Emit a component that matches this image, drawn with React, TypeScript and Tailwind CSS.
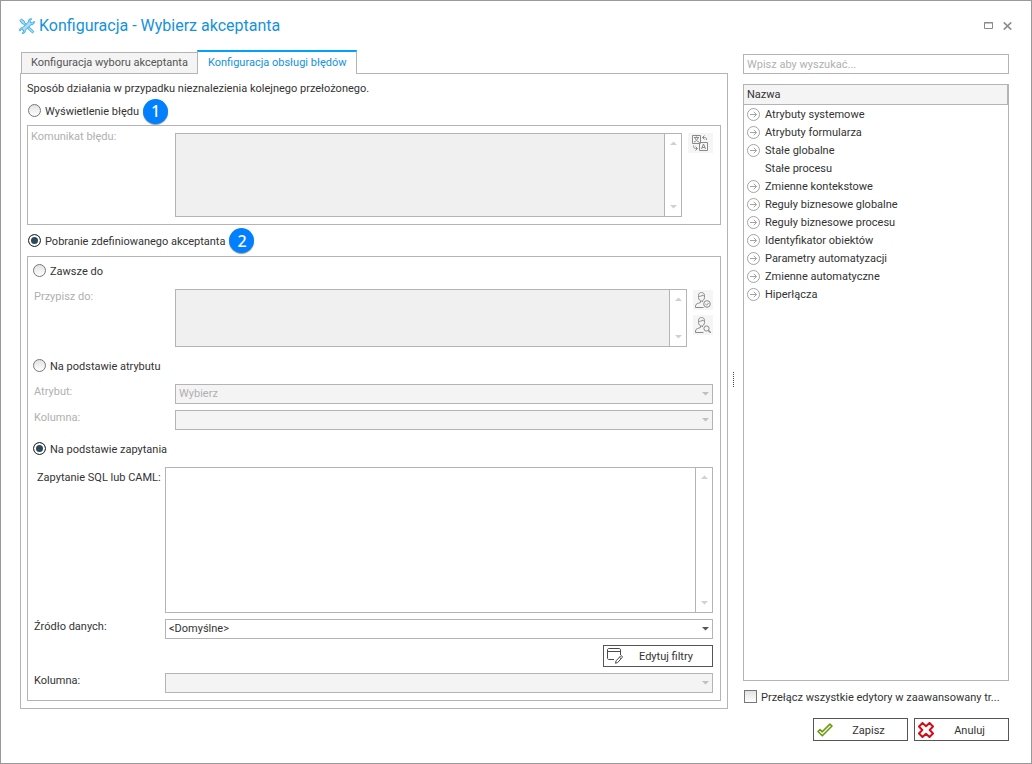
import { useState } from 'react';
import clsx from 'clsx';

type Mode = 'error' | 'acceptor';
type Source = 'always' | 'attribute' | 'query';

const TREE_ITEMS = [
  { name: 'Atrybuty systemowe', expandable: true },
  { name: 'Atrybuty formularza', expandable: true },
  { name: 'Stałe globalne', expandable: true },
  { name: 'Stałe procesu', expandable: false },
  { name: 'Zmienne kontekstowe', expandable: true },
  { name: 'Reguły biznesowe globalne', expandable: true },
  { name: 'Reguły biznesowe procesu', expandable: true },
  { name: 'Identyfikator obiektów', expandable: true },
  { name: 'Parametry automatyzacji', expandable: true },
  { name: 'Zmienne automatyczne', expandable: true },
  { name: 'Hiperłącza', expandable: true },
];

function ToolsIcon() {
  return (
    <svg className="size-4 shrink-0" viewBox="0 0 16 16" fill="none" stroke="#3aa9e4" strokeWidth="1">
      <path d="M1 2.6 2.4 1l3 2.3.2 1.4 8.9 8.4c.6.8-.7 2.2-1.6 1.5L4.4 5.9 3 5.6z" fill="#a9dcf7" />
      <path d="M15.2 3.2 13.4 5l-1.9-.5L11 2.700 12.800.9c-2-.7-3.900.9-3.400 3L3.700 9.700c-2.300-.4-3.600 1.600-2.900 3.300L2.500 11.400l1.700.5.5 1.800L3 15.300c2 .6 3.800-1 3.300-3.100l5.700-5.500c2.200.4 3.900-1.500 3.200-3.500z" fill="#a9dcf7" />
    </svg>
  );
}

function TranslateIcon() {
  return (
    <svg className="size-4" viewBox="0 0 16 16" fill="none" stroke="#8a8a8a">
      <path d="M.5.500h8v8h-8zM7.500 7.500h8v8h-8z" />
      <path d="M2 2.500h5M4.500 1.500V3M6 3c-.6 1.800-2 3.300-4 4M3 3C3.700 5 5 6.300 7 7" />
      <path d="M9.500 14l2-5 2 5M10.200 12.500h2.600" />
      <path d="M10.500 2.500h2c1.500 0 2 .8 2 2.500M12.500.5l-2 2 2 2M1.500 10.500c0 2 .5 3 2 3h2M3.500 11.500l2 2-2 2" />
    </svg>
  );
}

function PersonIcon({ badge }: { badge: 'check' | 'search' }) {
  return (
    <svg className="size-4" viewBox="0 0 16 16" fill="none" stroke="#8a8a8a">
      <path d="M3.500 3.500C3.500 1.500 4.800.5 6.500.5s3 1 3 3v2c0 1.900-1.400 3.500-3 3.500s-3-1.600-3-3.500z" />
      <path d="M3 4.500c2 0 3.700-.5 5-1.500.3.900.8 1.300 2 1.500" />
      <path d="M5.500 9v1.500c-2 .9-5 1-5 3.500v1.500h8M7.500 9v1" />
      {badge === 'check' ? (
        <>
          <circle cx="12" cy="12" r="3.300" />
          <path d="M10.400 12l1.200 1.200 2-2.200" />
        </>
      ) : (
        <>
          <circle cx="11.500" cy="11.500" r="2.600" />
          <path d="M13.400 13.400l2.300 2.300" strokeWidth="1.400" />
        </>
      )}
    </svg>
  );
}

function FilterIcon() {
  return (
    <svg className="size-4" viewBox="0 0 16 16" fill="none" stroke="#4a4a4a">
      <path d="M7 11.500H2c-1 0-1.500-.5-1.500-1.500V2C.5 1 1 .5 2 .5h10c1 0 1.500.5 1.500 1.500v5M.5 3.500h13" />
      <path d="M8.500 15.300l.6-2.500 4.600-4.900c.8-.6 2.200.6 1.500 1.600l-4.500 5zM12.500 9.300l1.500 1.300" />
    </svg>
  );
}

function CheckIcon() {
  return (
    <svg className="size-4" viewBox="0 0 16 16" fill="none" stroke="#6b9a0d" strokeWidth="1.600" strokeLinejoin="round">
      <path d="M1 9.500 3 7.600l2.300 2.200 7.600-7.700L15 4 5.300 13.800z" />
    </svg>
  );
}

function CrossIcon() {
  return (
    <svg className="size-4" viewBox="0 0 16 16" fill="none" stroke="#cf0f1b" strokeWidth="2" strokeLinejoin="round">
      <path d="M4.500 1 8 4.300 11.500 1 15 4.500 11.700 8l3.300 3.500L11.500 15 8 11.700 4.500 15 1 11.500 4.300 8 1 4.500z" />
    </svg>
  );
}

function Caret({ className, up = false }: { className?: string; up?: boolean }) {
  return (
    <svg className={clsx('h-1 w-[7px]', className)} viewBox="0 0 7 4" fill="currentColor">
      <path d={up ? 'M0 4h7L3.500.5z' : 'M0 0h7L3.500 3.500z'} />
    </svg>
  );
}

function RadioRow({ id, name, label, checked, onChange }: {
  id: string;
  name: string;
  label: string;
  checked: boolean;
  onChange: () => void;
}) {
  return (
    <div className="flex h-4 items-start gap-1">
      <input
        type="radio"
        id={id}
        name={name}
        checked={checked}
        onChange={onChange}
        className="mt-px size-[13px] shrink-0 appearance-none rounded-full border border-[#777] bg-linear-to-b from-[#e2e2e2] to-white checked:border-[#333] checked:bg-[#2c4a5c] checked:bg-none checked:inset-ring-2 checked:inset-ring-white"
      />
      <label htmlFor={id} className="pt-px">{label}</label>
    </div>
  );
}

function Badge({ children }: { children: string }) {
  return (
    <span className="flex size-[25px] items-center justify-center rounded-full bg-[#0080ff] font-['Noto_Sans',sans-serif] text-base font-medium text-white shadow-[0_1px_1px_#999]">
      {children}
    </span>
  );
}

function ScrollArea({ id, disabled = false, className }: { id: string; disabled?: boolean; className: string }) {
  return (
    <div className={clsx('flex min-w-0 flex-1 border border-[#b4b4b4]', className)}>
      <textarea
        id={id}
        disabled={disabled}
        className="min-w-0 flex-1 resize-none bg-white px-1 outline-none disabled:bg-[#f0f0f0]"
      />
      <div className="flex w-[17px] shrink-0 flex-col items-center justify-between border-l border-[#b4b4b4] py-[7px] text-[#d0d0d0]">
        <Caret up />
        <Caret />
      </div>
    </div>
  );
}

function SelectBox({ id, value, disabled = false }: { id: string; value: string; disabled?: boolean }) {
  return (
    <div className="relative min-w-0 flex-1">
      <select
        id={id}
        disabled={disabled}
        className="block h-5 w-full appearance-none border border-[#b4b4b4] bg-white px-[3px] leading-4 outline-none disabled:bg-[#f4f4f4] disabled:text-[#b0b0b0] disabled:opacity-100"
      >
        <option>{value}</option>
      </select>
      <Caret className={clsx('pointer-events-none absolute top-2 right-1', disabled ? 'text-[#c0c0c0]' : 'text-[#555]')} />
    </div>
  );
}

export default function App() {
  const [mode, setMode] = useState<Mode>('acceptor');
  const [source, setSource] = useState<Source>('query');
  const [search, setSearch] = useState('');
  const [advanced, setAdvanced] = useState(false);

  const items = TREE_ITEMS.filter((item) => item.name.toLowerCase().includes(search.toLowerCase()));
  const alwaysOff = source !== 'always';
  const attributeOff = source !== 'attribute';

  return (
    <div className="flex min-h-screen flex-col border border-[#999] bg-white pr-[22px] pb-[22px] pl-[19px] font-['Roboto','Noto_Sans',sans-serif] text-[11px] leading-4 text-[#333]">
      <header className="-mr-[3px] -ml-px flex h-[49px] items-center">
        <ToolsIcon />
        <h1 className="ml-1 flex-1 text-base leading-6 text-[#1492dc]">Konfiguracja - Wybierz akceptanta</h1>
        <div className="flex items-center gap-2.5 text-[#8a8a8a]">
          <button type="button" aria-label="Maksymalizuj">
            <svg className="h-[7px] w-[9px]" viewBox="0 0 9 7" fill="none" stroke="currentColor">
              <path d="M.5.500h8v6h-8zM0 1h9" />
            </svg>
          </button>
          <button type="button" aria-label="Zamknij">
            <svg className="h-2 w-[9px]" viewBox="0 0 9 8" fill="none" stroke="currentColor" strokeWidth="1.700">
              <path d="M.8.500l7.400 7M8.200.5l-7.400 7" />
            </svg>
          </button>
        </div>
      </header>

      <main className="flex flex-1">
        <section className="flex min-w-0 flex-1 flex-col pb-8">
          <div role="tablist" className="relative -mb-px flex h-6 items-end pl-px">
            <button
              type="button"
              role="tab"
              aria-selected={false}
              className="h-[22px] border border-r-0 border-[#b4b4b4] bg-[#f4f4f4] px-[9px] text-[#555]"
            >
              Konfiguracja wyboru akceptanta
            </button>
            <button
              type="button"
              role="tab"
              aria-selected={true}
              className="h-6 border-x border-t-2 border-x-[#b4b4b4] border-t-[#00a2ff] bg-white px-2.5 text-[#1492dc]"
            >
              Konfiguracja obsługi błędów
            </button>
          </div>

          <div role="tabpanel" className="flex flex-1 flex-col border border-[#b4b4b4] px-1.5 py-[7px]">
            <p>Sposób działania w przypadku nieznalezienia kolejnego przełożonego.</p>

            <div className="flex h-7 items-center gap-1 pl-px">
              <RadioRow
                id="mode-error"
                name="mode"
                label="Wyświetlenie błędu"
                checked={mode === 'error'}
                onChange={() => setMode('error')}
              />
              <Badge>1</Badge>
            </div>

            <div className="flex border border-[#b4b4b4] p-[3px]">
              <label htmlFor="error-message" className="w-36 shrink-0 text-[#b0b0b0]">
                Komunikat błędu:
              </label>
              <div className="flex min-w-0 flex-1 gap-1.5 py-1 pr-1">
                <ScrollArea id="error-message" disabled={mode !== 'error'} className="h-[84px]" />
                <button
                  type="button"
                  aria-label="Tłumaczenia"
                  className="flex h-5 w-[25px] items-center bg-[#f5f5f5] pl-1"
                >
                  <TranslateIcon />
                </button>
              </div>
            </div>

            <div className="flex h-[31px] items-center gap-1 pl-px">
              <RadioRow
                id="mode-acceptor"
                name="mode"
                label="Pobranie zdefiniowanego akceptanta"
                checked={mode === 'acceptor'}
                onChange={() => setMode('acceptor')}
              />
              <Badge>2</Badge>
            </div>

            <div className="flex flex-1 flex-col gap-[5px] border border-[#b4b4b4] pr-[7px] pb-[7px] pl-[5px]">
              <div className="flex flex-col gap-1">
                <div className="flex h-7 items-center">
                  <RadioRow
                    id="source-always"
                    name="source"
                    label="Zawsze do"
                    checked={source === 'always'}
                    onChange={() => setSource('always')}
                  />
                </div>
                <div className="flex pl-px">
                  <label htmlFor="assign-to" className={clsx('w-[141px] shrink-0', alwaysOff && 'text-[#b0b0b0]')}>
                    Przypisz do:
                  </label>
                  <div className="flex min-w-0 flex-1 gap-1.5">
                    <ScrollArea id="assign-to" disabled={alwaysOff} className="h-[58px]" />
                    <div className="flex flex-col gap-[5px] pt-px">
                      <button type="button" aria-label="Sprawdź osobę" className="flex size-5 items-center justify-center bg-[#f5f5f5]">
                        <PersonIcon badge="check" />
                      </button>
                      <button type="button" aria-label="Wyszukaj osobę" className="flex size-5 items-center justify-center bg-[#f5f5f5]">
                        <PersonIcon badge="search" />
                      </button>
                    </div>
                  </div>
                </div>
              </div>

              <div className="flex flex-col gap-1">
                <div className="flex h-7 items-center">
                  <RadioRow
                    id="source-attribute"
                    name="source"
                    label="Na podstawie atrybutu"
                    checked={source === 'attribute'}
                    onChange={() => setSource('attribute')}
                  />
                </div>
                <div className={clsx('flex flex-col gap-1.5 pl-px', attributeOff && 'text-[#b0b0b0]')}>
                  <div className="flex">
                    <label htmlFor="attribute" className="w-[141px] shrink-0">Atrybut:</label>
                    <SelectBox id="attribute" value="Wybierz" disabled={attributeOff} />
                  </div>
                  <div className="flex">
                    <label htmlFor="attribute-column" className="w-[141px] shrink-0">Kolumna:</label>
                    <SelectBox id="attribute-column" value="" disabled={attributeOff} />
                  </div>
                </div>
              </div>

              <div className="flex flex-1 flex-col gap-1">
                <div className="flex h-7 items-center">
                  <RadioRow
                    id="source-query"
                    name="source"
                    label="Na podstawie zapytania"
                    checked={source === 'query'}
                    onChange={() => setSource('query')}
                  />
                </div>
                <div className="flex flex-1 flex-col gap-1.5 pl-px">
                  <div className="flex flex-1">
                    <label htmlFor="query" className="w-[131px] shrink-0 pt-[3px] pl-[3px] whitespace-nowrap">
                      Zapytanie SQL lub CAML:
                    </label>
                    <ScrollArea id="query" className="min-h-24" />
                  </div>
                  <div className="flex">
                    <label htmlFor="data-source" className="w-[131px] shrink-0">Źródło danych:</label>
                    <SelectBox id="data-source" value="<Domyślne>" />
                  </div>
                  <button
                    type="button"
                    className="flex h-[22px] w-[110px] items-center self-end border border-[#555] px-[3px]"
                  >
                    <FilterIcon />
                    <span className="flex-1 pt-0.5 text-center">Edytuj filtry</span>
                  </button>
                  <div className="flex">
                    <label htmlFor="query-column" className="w-[131px] shrink-0">Kolumna:</label>
                    <SelectBox id="query-column" value="" disabled />
                  </div>
                </div>
              </div>
            </div>
          </div>
        </section>

        <div role="separator" className="mr-1 flex w-[11px] shrink-0 items-center justify-center pb-8">
          <div className="h-[15px] border-l border-dotted border-[#444]" />
        </div>

        <aside className="flex w-[266px] shrink-0 flex-col pt-1">
          <input
            type="text"
            aria-label="Szukaj"
            placeholder="Wpisz aby wyszukać..."
            value={search}
            onChange={(e) => setSearch(e.target.value)}
            className="h-5 border border-[#b4b4b4] px-[3px] outline-none placeholder:text-[#b0b0b0]"
          />

          <div className="mt-2.5 flex-1 border border-[#b4b4b4]">
            <table className="w-full border-separate border-spacing-0">
              <thead>
                <tr>
                  <th className="h-5 border-r border-b border-[#b4b4b4] bg-[#f4f4f4] px-[3px] text-left font-normal">
                    Nazwa
                  </th>
                </tr>
              </thead>
              <tbody>
                {items.map((item) => (
                  <tr key={item.name}>
                    <td className="h-[18px] px-[3px]">
                      <div className="flex items-center gap-1">
                        <span className="flex size-[14px] items-center">
                          {item.expandable && (
                            <button type="button" aria-label={`Rozwiń: ${item.name}`}>
                              <svg className="size-[13px]" viewBox="0 0 13 13" fill="none" stroke="#a3a3a3">
                                <circle cx="6.500" cy="6.500" r="6" />
                                <path d="M3 6.500h6.500M6.800 3.800l2.700 2.700-2.700 2.700" />
                              </svg>
                            </button>
                          )}
                        </span>
                        <span className="pt-0.5">{item.name}</span>
                      </div>
                    </td>
                  </tr>
                ))}
              </tbody>
            </table>
          </div>

          <div className="mt-2 flex h-4 items-start gap-1 pl-px">
            <input
              type="checkbox"
              id="advanced"
              checked={advanced}
              onChange={(e) => setAdvanced(e.target.checked)}
              className="mt-px size-[13px] shrink-0 appearance-none border border-[#777] bg-linear-to-b from-[#e2e2e2] to-white checked:bg-[#2c4a5c] checked:bg-none checked:inset-ring-2 checked:inset-ring-white"
            />
            <label htmlFor="advanced" className="pt-px">Przełącz wszystkie edytory w zaawansowany tr...</label>
          </div>

          <div className="mt-[13px] flex justify-end gap-1.5">
            <button type="button" className="flex h-[23px] w-[95px] items-center border border-[#555] px-[3px]">
              <CheckIcon />
              <span className="flex-1 pt-0.5 text-center">Zapisz</span>
            </button>
            <button type="button" className="flex h-[23px] w-[95px] items-center border border-[#555] px-[3px]">
              <CrossIcon />
              <span className="flex-1 pt-0.5 text-center">Anuluj</span>
            </button>
          </div>
        </aside>
      </main>
    </div>
  );
}
